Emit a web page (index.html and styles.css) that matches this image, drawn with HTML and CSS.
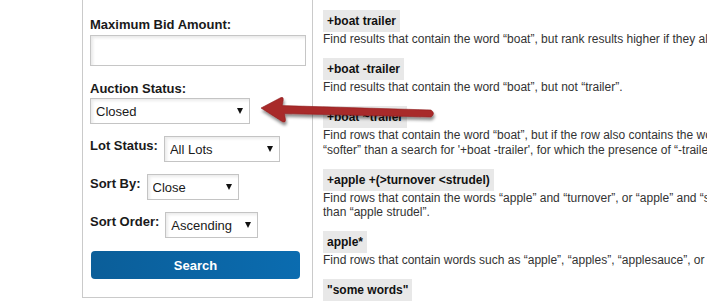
FILE: index.html
```html
<!DOCTYPE html>
<html lang="en">
<head>
  <meta charset="UTF-8">
  <meta name="viewport" content="width=device-width, initial-scale=1.0">
  <title>Auction Search</title>
  <link rel="stylesheet" href="styles.css">
</head>
<body>

<div class="page">

  <div class="filters">
    <label class="field-label" for="maxBid">Maximum Bid Amount:</label>
    <input id="maxBid" class="text-input" type="text">

    <label class="field-label label-status" for="status">Auction Status:</label>
    <div class="row row-first">
      <span class="select-wrap"><select id="status" class="select select-status"><option>Closed</option><option>Open</option></select></span>
    </div>

    <div class="row">
      <label class="row-label" for="lots">Lot Status:</label>
      <span class="select-wrap"><select id="lots" class="select select-lots"><option>All Lots</option></select></span>
    </div>

    <div class="row">
      <label class="row-label" for="sortBy">Sort By:</label>
      <span class="select-wrap"><select id="sortBy" class="select select-sort"><option>Close</option></select></span>
    </div>

    <div class="row">
      <label class="row-label" for="sortOrder">Sort Order:</label>
      <span class="select-wrap"><select id="sortOrder" class="select select-order"><option>Ascending</option><option>Descending</option></select></span>
    </div>

    <button class="search-btn" type="button">Search</button>
  </div>

  <div class="help">
    <div class="term">
      <code class="term-code">+boat trailer</code>
      <p class="term-desc">Find results that contain the word “boat”, but rank results higher if they also contain “trailer”.</p>
    </div>
    <div class="term">
      <code class="term-code">+boat -trailer</code>
      <p class="term-desc">Find results that contain the word “boat”, but not “trailer”.</p>
    </div>
    <div class="term">
      <code class="term-code">+boat ~trailer</code>
      <p class="term-desc">Find rows that contain the word “boat”, but if the row also contains the word “trailer”, rate it lower than if row does not. This is “softer” than a search for '+boat -trailer', for which the presence of “-trailer” causes the row not to be returned at all.</p>
    </div>
    <div class="term">
      <code class="term-code">+apple +(&gt;turnover &lt;strudel)</code>
      <p class="term-desc">Find rows that contain the words “apple” and “turnover”, or “apple” and “strudel” (in any order), but rank “apple turnover” higher than “apple strudel”.</p>
    </div>
    <div class="term">
      <code class="term-code">apple*</code>
      <p class="term-desc">Find rows that contain words such as “apple”, “apples”, “applesauce”, or “applet”.</p>
    </div>
    <div class="term">
      <code class="term-code">"some words"</code>
      <p class="term-desc">Find rows that contain the exact phrase “some words” (for example, rows that contain “some words of wisdom” but not “some noise words”).</p>
    </div>
  </div>

  <!-- annotation arrow pointing at the status select -->
  <svg class="arrow" width="707" height="303" viewBox="0 0 707 303">
    <defs>
      <filter id="arrowShadow" x="-10%" y="-50%" width="120%" height="200%">
        <feDropShadow dx="1" dy="3" stdDeviation="1.6" flood-color="#000" flood-opacity="0.45"/>
      </filter>
    </defs>
    <path d="M261,108 L281,97.5 Q283.8,96.8 283.2,100 L282.2,105.6 L431,110 Q436,113.3 431,117 L284.4,113.6 L285.4,119.4 Q285.8,122.6 283,122 Z"
          fill="#a8292a" stroke="#8f1e1f" stroke-width="0.6" filter="url(#arrowShadow)"/>
  </svg>

</div>

</body>
</html>
```

FILE: styles.css
```css
* { margin:0; padding:0; box-sizing:border-box; }

html, body { overflow:hidden; }
body { background:#fff; font-family:"Liberation Sans", Arial, sans-serif; color:#1a1a1a; }

.page { position:relative; display:flex; align-items:flex-start; width:707px; height:303px; }

/* left filter panel */
.filters { flex:0 0 231px; margin-left:82px; padding:17px 6px 18px 7px; border:1px solid #cacaca; border-top:none; }

.field-label { display:block; font-size:13px; font-weight:bold; line-height:15px; }
.label-status { margin-top:15px; }

.text-input { display:block; width:100%; height:31px; margin-top:3px; border:1px solid #c6c6c6; background:#fff; box-shadow:inset 2px 2px 3px rgba(0,0,0,.09); }

.row { display:flex; align-items:flex-start; gap:6px; margin-top:12px; }
.row-first { margin-top:2px; }
.row-label { font-size:13px; font-weight:bold; line-height:15px; padding-top:2px; white-space:nowrap; }

.select-wrap { position:relative; display:block; }
.select-wrap::after { content:""; position:absolute; right:7px; top:10px; border-left:3px solid transparent; border-right:3px solid transparent; border-top:6px solid #111; pointer-events:none; }

.select { display:block; height:26px; padding:0 18px 0 5px; border:1px solid #c4c4c4; background:#fff; box-shadow:inset 2px 2px 3px rgba(0,0,0,.08); font-family:"Liberation Sans", Arial, sans-serif; font-size:13px; color:#1a1a1a; -webkit-appearance:none; appearance:none; border-radius:0; }
.select-status { width:160px; }
.select-lots { width:116px; }
.select-sort { width:92px; }
.select-order { width:93px; }

.search-btn { display:block; width:209px; height:28px; margin:13px 0 0 1px; border:none; border-radius:4px; background:linear-gradient(to right, #0b5e99, #0b6cb0); color:#fff; font-family:"Liberation Sans", Arial, sans-serif; font-size:13px; font-weight:bold; }

/* right help column */
.help { flex:0 0 695px; padding:10px 0 0 10px; }

.term-code { display:inline-block; padding:4px; background:#e8e8e8; font-family:"Liberation Sans", Arial, sans-serif; font-size:12px; font-weight:bold; line-height:14px; color:#111; vertical-align:top; }
.term-desc { font-size:12px; line-height:14.5px; color:#333; margin-bottom:11.5px; }

.arrow { position:absolute; left:0; top:0; pointer-events:none; }
```
